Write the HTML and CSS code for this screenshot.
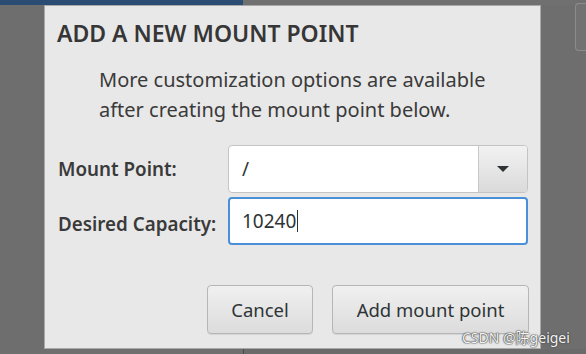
FILE: index.html
```html
<!DOCTYPE html>
<html>
<head>
<meta charset="utf-8">
<link rel="stylesheet" href="styles.css">
</head>
<body>
<div class="app">
  <div class="topstrip">
    <div class="blue"></div>
    <div class="rest"></div>
  </div>
  <div class="main">
    <div class="sidetab"></div>
  </div>
  <div class="bottom">
    <div class="bottom-left"></div>
    <div class="bottom-right"></div>
  </div>
</div>

<div class="dialog">
  <h1 class="title">ADD A NEW MOUNT POINT</h1>
  <p class="intro">More customization options are available<br>after creating the mount point below.</p>
  <div class="form">
    <label class="label">Mount Point:</label>
    <div class="combo">
      <div class="combo-text">/</div>
      <div class="combo-btn"><span class="arrow"></span></div>
    </div>
    <label class="label">Desired Capacity:</label>
    <div class="entry">10240<span class="caret"></span></div>
  </div>
  <div class="buttons">
    <button class="btn btn-cancel">Cancel</button>
    <button class="btn btn-add">Add mount point</button>
  </div>
</div>

<div class="watermark">CSDN @陈geigei</div>
</body>
</html>
```

FILE: styles.css
```css
html, body {
  margin: 0;
  padding: 0;
}
body {
  width: 586px;
  height: 354px;
  overflow: hidden;
  background: #6e6e6e;
  font-family: "Noto Sans", "Open Sans", sans-serif;
  position: relative;
}
.app {
  display: flex;
  flex-direction: column;
  height: 354px;
}
.topstrip {
  display: flex;
  height: 5px;
}
.blue {
  width: 243px;
  background: #2b4d73;
}
.rest {
  flex: 1;
  background: #707070;
}
.main {
  flex: 1;
  display: flex;
  justify-content: flex-end;
}
.sidetab {
  width: 10px;
  height: 46px;
  margin-top: -2px;
  border: 1px solid #8c8c8c;
  border-right: none;
  border-radius: 4px 0 0 4px;
  background: #727272;
}
.bottom {
  display: flex;
  height: 5px;
}
.bottom-left {
  width: 243px;
  background: #6e6e6e;
}
.bottom-right {
  flex: 1;
  border-left: 1px solid #4a4a4a;
  background: #6a6a6a;
}

.dialog {
  position: absolute;
  left: 44px;
  top: 5px;
  width: 495px;
  height: 342px;
  border: 1px solid #a9a9a9;
  background: #e8e8e8;
  display: flex;
  flex-direction: column;
  color: #2e3436;
}
.title {
  margin: 12px 0 0 12px;
  font-size: 23px;
  font-weight: 600;
  line-height: 30px;
  color: #363636;
}
.intro {
  margin: 17px 0 0 54px;
  font-size: 20px;
  line-height: 30px;
  color: #3a3a3a;
}
.form {
  margin: 20px 12px 0 13px;
  display: grid;
  grid-template-columns: 1fr 300px;
  row-gap: 4px;
  align-items: center;
}
.label {
  font-size: 18.8px;
  font-weight: 600;
  color: #3a3a3a;
}
.form .label:nth-of-type(2) {
  padding-top: 6px;
}
.combo {
  height: 48px;
  box-sizing: border-box;
  display: flex;
  border: 1px solid #c4c4c4;
  border-radius: 4px;
  background: #fff;
  overflow: hidden;
}
.combo-text {
  flex: 1;
  padding-left: 13px;
  font-size: 19px;
  line-height: 46px;
  color: #2e3436;
}
.combo-btn {
  width: 48px;
  border-left: 1px solid #c8c8c8;
  background: linear-gradient(#f2f2f2, #dadada);
  display: flex;
  align-items: center;
  justify-content: center;
}
.arrow {
  width: 0;
  height: 0;
  border-left: 6px solid transparent;
  border-right: 6px solid transparent;
  border-top: 6px solid #2e3436;
}
.entry {
  height: 48px;
  box-sizing: border-box;
  border: 2px solid #4a90d9;
  border-radius: 4px;
  background: #fff;
  padding-left: 12px;
  font-size: 19px;
  line-height: 44px;
  color: #2e3436;
  display: flex;
  align-items: center;
}
.caret {
  display: inline-block;
  width: 1px;
  height: 22px;
  background: #2e3436;
  margin-left: 1px;
}
.buttons {
  margin: 40px 11px 0 0;
  display: flex;
  justify-content: flex-end;
  gap: 19px;
}
.btn {
  height: 49px;
  box-sizing: border-box;
  border: 1px solid #b6b6b6;
  border-radius: 4px;
  background: linear-gradient(#f0f0f0, #dcdcdc);
  box-shadow: 0 1px 0 rgba(0,0,0,0.08);
  font-family: "Noto Sans", "Open Sans", sans-serif;
  font-size: 18.5px;
  color: #2e3436;
  padding: 0;
}
.btn-cancel {
  width: 106px;
}
.btn-add {
  width: 197px;
}
.watermark {
  position: absolute;
  left: 462px;
  top: 327px;
  font-family: "Noto Sans", "Noto Sans CJK SC", sans-serif;
  font-size: 14px;
  color: #f4f4f4;
  text-shadow: 0 0 1px #444, 0 0 1px #444, 0 0 2px #555;
  white-space: nowrap;
}
```
